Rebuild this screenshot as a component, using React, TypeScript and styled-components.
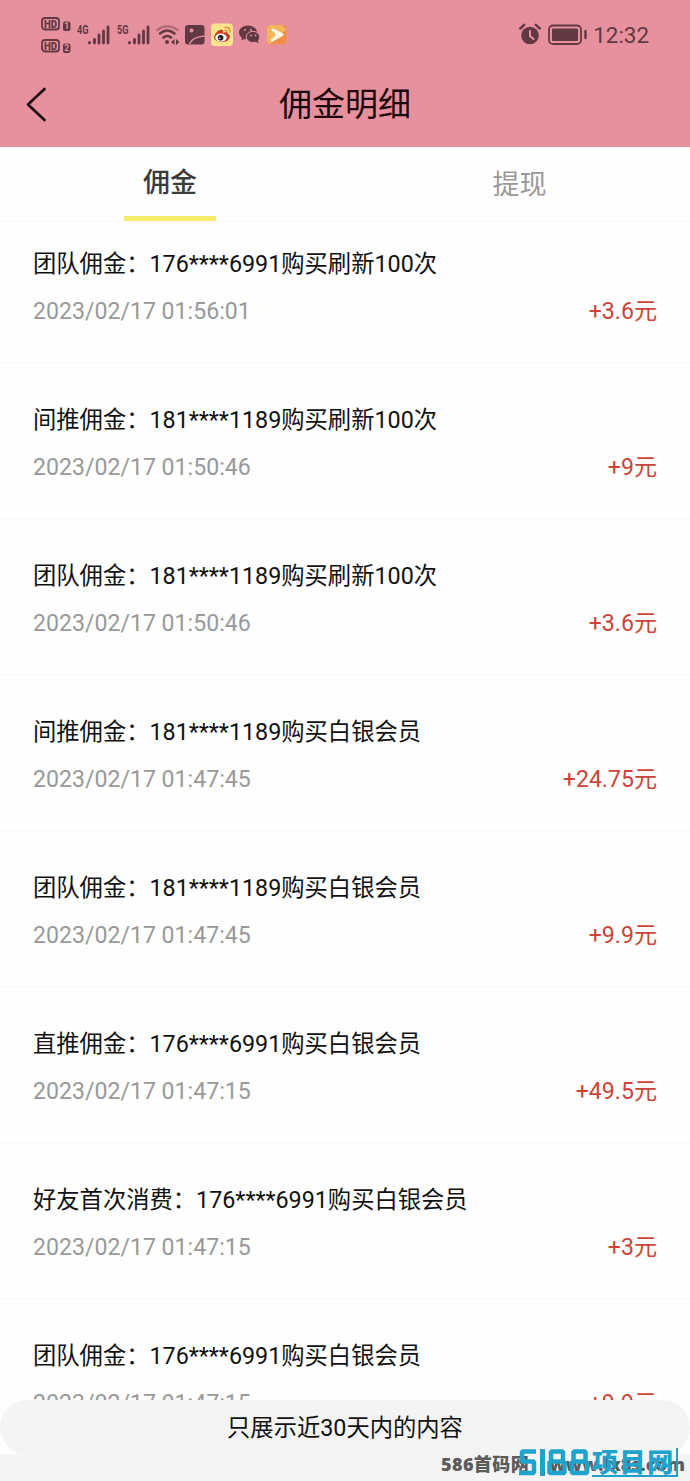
import React from "react";
import styled, { createGlobalStyle } from "styled-components";

const Global = createGlobalStyle`
  *{box-sizing:border-box}
  body{margin:0;background:#fff;font-family:Roboto,"Noto Sans CJK SC",sans-serif;color:#111}
`;
const Page = styled.div`position:relative;height:1481px;overflow:hidden;background:#fefefe;display:flex;flex-direction:column;`;
const Top = styled.header`height:147px;background:#e7919f;flex:none;`;
const StatusBar = styled.div`height:70px;display:flex;align-items:center;justify-content:space-between;padding:0 41px 0 40px;color:#623943;`;
const Clock = styled.div`display:flex;align-items:center;gap:5px;font-size:22.4px;line-height:30px;`;
const TitleBar = styled.div`height:70px;display:grid;grid-template-columns:60px 1fr 60px;align-items:center;`;
const Title = styled.h1`margin:0;text-align:center;font-size:33px;line-height:48px;font-weight:400;color:#1c0508;`;
const Back = styled.svg`margin:-2px 0 0 24px;display:block;`;
const Tabs = styled.nav`height:75px;flex:none;display:grid;grid-template-columns:340px 1fr;border-bottom:1px solid #f8f8f8;`;
const Tab = styled.div<{ $active?: boolean }>`
  display:flex;flex-direction:column;align-items:center;justify-content:space-between;
  font-size:27px;line-height:40px;padding:${p => (p.$active ? "16px 0 0" : "18px 0 0 9px")};
  font-weight:${p => (p.$active ? 500 : 400)};color:${p => (p.$active ? "#3c3c3c" : "#999")};
`;
const Underline = styled.div`width:92px;height:5px;background:#f5ed68;`;
const List = styled.main`flex:none;margin-top:-15px;`;
const Row = styled.section`height:156px;border-bottom:1px solid #f8f8f8;padding:40px 33px 0;`;
const Name = styled.div`font-size:23.3px;line-height:34px;color:#111;white-space:nowrap;`;
const Meta = styled.div`display:flex;justify-content:space-between;font-size:23.1px;line-height:34px;margin-top:14px;color:#999;`;
const Amount = styled.span`color:#cc4438;`;
const Footer = styled.footer`position:absolute;left:0;right:0;bottom:0;height:81px;`;
const Notice = styled.div`height:55px;border-radius:28px;background:#f4f4f4;text-align:center;font-size:23.3px;line-height:56px;color:#111;`;
const Base = styled.div`height:26px;background:#f4f4f4;`;
const Mark = styled.div`position:absolute;right:5px;top:50px;font:800 18px/28px "Open Sans","Noto Sans CJK SC",sans-serif;color:#5b5b5b;white-space:nowrap;display:flex;justify-content:space-between;width:244px;`;
const MarkLead = styled.span`letter-spacing:.4px;`;
const Brand = styled.div`position:absolute;left:518px;top:48px;display:flex;align-items:flex-start;color:#1fa3cc;`;
const BrandName = styled.span`
  font:900 26px/25px "Noto Sans CJK SC",sans-serif;white-space:nowrap;
  border:solid #1fa3cc;border-width:0 2px 2px 0;height:29px;width:86px;margin-left:1px;letter-spacing:1.6px;
`;

const rows = [
  ["团队佣金：176****6991购买刷新100次", "2023/02/17 01:56:01", "+3.6元"],
  ["间推佣金：181****1189购买刷新100次", "2023/02/17 01:50:46", "+9元"],
  ["团队佣金：181****1189购买刷新100次", "2023/02/17 01:50:46", "+3.6元"],
  ["间推佣金：181****1189购买白银会员", "2023/02/17 01:47:45", "+24.75元"],
  ["团队佣金：181****1189购买白银会员", "2023/02/17 01:47:45", "+9.9元"],
  ["直推佣金：176****6991购买白银会员", "2023/02/17 01:47:15", "+49.5元"],
  ["好友首次消费：176****6991购买白银会员", "2023/02/17 01:47:15", "+3元"],
  ["团队佣金：176****6991购买白银会员", "2023/02/17 01:47:15", "+9.9元"],
];

const Signal = ({ x, label }: { x: number; label: string }) => (
  <g transform={`translate(${x} 1)`}>
    <text x="0" y="27.5" fontSize="12.5" fontWeight="700" textLength="11.5" lengthAdjust="spacingAndGlyphs">{label}</text>
    <path d="M12.500 36.500v.5M17.500 33.500v3.500M22 29v8M26.500 25v12M31 21v16" stroke="currentColor" strokeWidth="2.8" strokeLinecap="round" />
  </g>
);

const StatusIcons = () => (
  <svg width="250" height="60" viewBox="0 0 250 60" fill="currentColor" fontFamily="Roboto,sans-serif">
    {[12, 34].map((y, i) => (
      <g key={y}>
        <rect x="2" y={y + 1} width="17" height="11.5" rx="3" fill="none" stroke="currentColor" strokeWidth="1.8" />
        <text x="4" y={y + 11} fontSize="11.5" fontWeight="900" textLength="13" lengthAdjust="spacingAndGlyphs">HD</text>
        <rect x="23" y={y + 4.5} width="7.5" height="9.5" rx="2" />
        <text x="24.3" y={y + 12.3} fontSize="8.5" fontWeight="700" fill="#e7919f">{i + 1}</text>
      </g>
    ))}
    <Signal x={37} label="4G" />
    <Signal x={77} label="5G" />
    <g fill="none" stroke="currentColor" strokeWidth="2.6" strokeLinecap="round">
      <path d="M117.500 25Q127 17.500 137.500 25" opacity=".4" />
      <path d="M120 28.500Q127 22.500 134.500 28.500M123.500 32.500Q127 29.500 131 32.500" />
    </g>
    <circle cx="127" cy="37" r="2" />
    <path d="M131 37l3.500-3v6zM139.500 37l-3.500-3v6z" />
    <rect x="145" y="20" width="19.5" height="19.5" rx="3" />
    <circle cx="151.5" cy="25.5" r="2" fill="#e7919f" />
    <path d="M149.500 39Q152 32 164.5 31" fill="none" stroke="#e7919f" strokeWidth="1.4" />
    <rect x="171" y="18.5" width="22" height="22.5" rx="4" fill="#fce38e" />
    <path d="M174 33c0-4 5-9 8-8 2 0 1 3 1 3s5-2 5 1c3 1 2 3 1 5-2 4-13 4-15-1z" fill="#c93c22" />
    <ellipse cx="181" cy="32.5" rx="5.7" ry="4" fill="#fff" />
    <circle cx="180.6" cy="32.8" r="2.8" fill="#241713" />
    <circle cx="179.8" cy="33.2" r=".8" fill="#fff" />
    <path d="M184.5 22.5q6-1 5.5 5M184.5 25.5q3-.5 2.5 2" fill="none" stroke="#e38a2a" strokeWidth="1.4" />
    <path d="M208 20.5c-5 0-9 3-9 7 0 2.3 1.2 4 3 5.300l-.8 2.700 3.300-1.600c1 .3 2.200.4 3.500.4 5 0 9-3 9-6.900s-4-6.900-9-6.900z" />
    <ellipse cx="213" cy="32" rx="6.800" ry="5.600" stroke="#e7919f" strokeWidth="1" />
    <path d="M215 36l3.500 2.500-.6-3.500z" />
    <g fill="#e7919f">
      <circle cx="205" cy="25" r="1" /><circle cx="211" cy="25" r="1" />
      <circle cx="211" cy="30.500" r=".9" /><circle cx="215.500" cy="30.500" r=".9" />
    </g>
    <rect x="227" y="20" width="19.500" height="19.500" rx="4" fill="#ee9048" />
    <path d="M231 20h11l4.500 5-8 5-8 9c-2 0-3.500-2-3.500-4V24c0-2 1.500-4 4-4z" fill="#f4b45c" />
    <path d="M233 25l9 4.700-9.500 5.300" fill="none" stroke="#fff7e2" strokeWidth="3" strokeLinejoin="round" strokeLinecap="round" />
    <path d="M233 25l9 4.700-9.500 5.300 3-5.300z" fill="#fff7e2" />
  </svg>
);

const ClockIcons = () => (
  <svg width="70" height="30" viewBox="0 0 70 30" fill="none" stroke="currentColor" strokeWidth="2" strokeLinecap="round">
    <circle cx="12" cy="15.500" r="8.800" fill="currentColor" stroke="none" />
    <path d="M2.200 8.500l4-3.700M21.800 8.500l-4-3.700" strokeWidth="2.400" />
    <path d="M12 11v5l3.500 3" stroke="#e7919f" />
    <rect x="31" y="5.500" width="32" height="18.500" rx="4" strokeWidth="1.800" />
    <rect x="34" y="8.500" width="26" height="12.500" rx="1" fill="currentColor" stroke="none" />
    <path d="M67.500 11v7" strokeWidth="2.400" />
  </svg>
);

export default function App() {
  return (
    <>
      <Global />
      <Page>
        <Top>
          <StatusBar>
            <StatusIcons />
            <Clock><ClockIcons /><span>12:32</span></Clock>
          </StatusBar>
          <TitleBar>
            <Back width="24" height="36" viewBox="0 0 24 36" fill="none" stroke="#1c0508" strokeWidth="2.600" strokeLinecap="round" strokeLinejoin="round">
              <path d="M20.500 3L4 18.500 20.500 34" />
            </Back>
            <Title>佣金明细</Title>
          </TitleBar>
        </Top>
        <Tabs>
          <Tab $active>佣金<Underline /></Tab>
          <Tab>提现</Tab>
        </Tabs>
        <List>
          {rows.map(([name, date, amount], i) => (
            <Row key={i}>
              <Name>{name}</Name>
              <Meta><span>{date}</span><Amount>{amount}</Amount></Meta>
            </Row>
          ))}
        </List>
        <Footer>
          <Notice>只展示近30天内的内容</Notice>
          <Base />
          <Mark><MarkLead>586首码网</MarkLead><span>www.ix8s.com</span></Mark>
          <Brand>
            <svg width="73" height="30" viewBox="0 0 73 30" fill="none" stroke="currentColor" strokeWidth="4.5" strokeLinejoin="bevel">
              <path d="M18 3.500H4V13.500H16V25H1" />
              <path d="M24.500 1v27" strokeWidth="5" />
              <path d="M33 3.500h12v10h-12zM31.500 13.500h15v11.500h-15zM55.500 3.500h12v10h-12zM54 13.500h15v11.500h-15z" />
            </svg>
            <BrandName>项目网</BrandName>
          </Brand>
        </Footer>
      </Page>
    </>
  );
}
